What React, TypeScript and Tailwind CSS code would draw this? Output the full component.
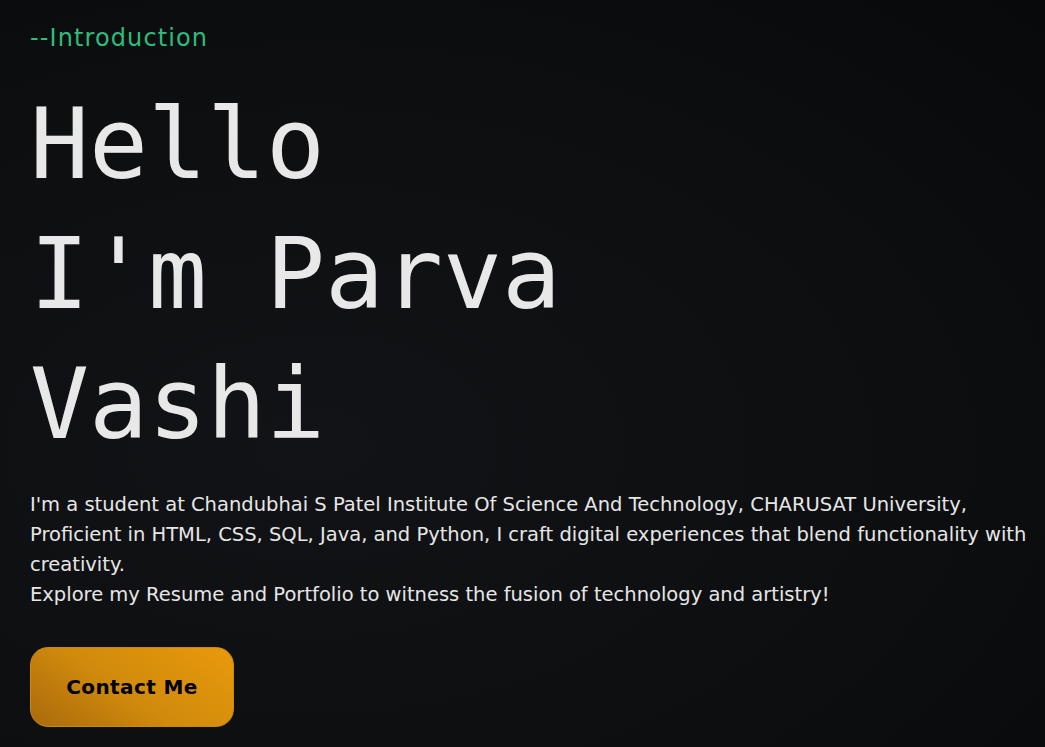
import React from "react";

export default function App() {
  return (
    <div className="min-h-[747px] w-full bg-[radial-gradient(ellipse_at_30%_60%,#121316_0%,#0d0e10_60%,#08090a_100%)] pl-[30px] pr-[6px] pt-[22px] font-['DejaVu_Sans','Liberation_Sans',sans-serif] overflow-hidden">
      <div className="text-[24px] leading-[32px] tracking-[1.1px] text-[#2ebd7c]">--Introduction</div>
      <h1 className="mt-[25px] font-['DejaVu_Sans_Mono',monospace] text-[98px] leading-[130px] font-normal text-[#e8e8e8]">
        <div>Hello</div>
        <div>I'm Parva</div>
        <div>Vashi</div>
      </h1>
      <p className="mt-[21px] text-[19.5px] leading-[30px] text-[#e6e6e6]">
        I'm a student at Chandubhai S Patel Institute Of Science And Technology, CHARUSAT University, Proficient in HTML, CSS, SQL, Java, and Python, I craft digital experiences that blend functionality with creativity.
        <br />
        Explore my Resume and Portfolio to witness the fusion of technology and artistry!
      </p>
      <button className="mt-[37px] h-[80px] w-[204px] rounded-[18px] border border-[#c98a10] bg-[linear-gradient(35deg,#a96a0c_0%,#d08a0c_45%,#e9990c_100%)] text-[20px] font-semibold tracking-[0.4px] text-black">
        Contact Me
      </button>
    </div>
  );
}
